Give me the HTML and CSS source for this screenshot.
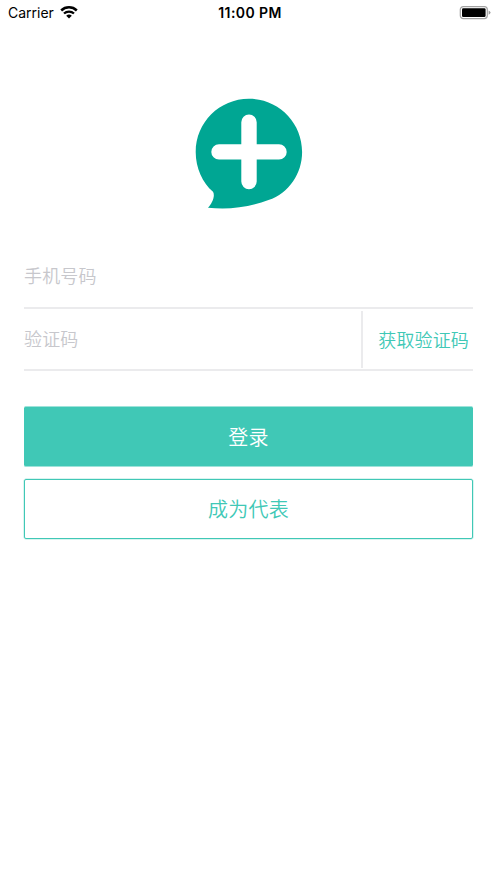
FILE: index.html
```html
<!DOCTYPE html>
<html lang="zh-CN">
<head>
<meta charset="utf-8">
<title>登录</title>
<link rel="stylesheet" href="styles.css">
</head>
<body>
<header class="status">
  <div class="carrier"><span>Carrier</span>
    <svg class="wifi" width="18" height="13" viewBox="0 0 18 13" fill="none" stroke="#000">
      <path d="M1.2 4.500C5.600.3 12.400.3 16.800 4.500" stroke-width="2.500"/>
      <path d="M4 7.500C6.800 4.900 11.200 4.900 14 7.500" stroke-width="2.300"/>
      <path d="M6.200 9.700Q9 7.500 11.800 9.700L9 12.500Z" fill="#000" stroke="none"/>
    </svg>
  </div>
  <div class="time">11:00 PM</div>
  <svg class="battery" width="32" height="14" viewBox="0 0 32 14">
    <rect x="1.300" y=".6" width="27" height="12" rx="3" fill="#fff" stroke="#a2a2a2" stroke-width="1.200"/>
    <rect x="3" y="2.200" width="23.600" height="8.800" rx="1.300"/>
    <path d="M29.600 4.400Q31.500 5.200 31.500 6.600T29.600 8.800Z" fill="#999"/>
  </svg>
</header>
<main class="login">
  <svg class="logo" width="130" height="130" viewBox="0 0 130 130">
    <path fill="#00a693" d="M63.900 8.800C93.300 8.800 117.100 32.500 117.100 61.900C117.100 83.500 104 103 83.500 110C64 117.500 43 120 23 117.700C27 113.500 30.500 106 28 101.800C17.500 92.500 10.700 78 10.700 61.900C10.700 32.500 34.500 8.800 63.900 8.800Z"/>
    <path d="M34 61.900H94M64 32.200V91.600" stroke="#fff" stroke-width="15.400" stroke-linecap="round"/>
  </svg>
  <div class="field"><span class="hint">手机号码</span></div>
  <div class="field code"><span class="hint">验证码</span><span class="get">获取验证码</span></div>
  <div class="button primary">登录</div>
  <div class="button outline">成为代表</div>
</main>
</body>
</html>
```
FILE: styles.css
```css
* { box-sizing: border-box; }
body {
  margin: 0;
  min-height: 883px;
  background: #fff;
  font-family: "Noto Sans CJK SC", sans-serif;
  font-weight: 350;
}
.status {
  display: grid;
  grid-template-columns: 1fr auto 1fr;
  align-items: center;
  height: 26px;
  padding: 0 6px 0 8px;
  font: 400 14px/26px Inter, sans-serif;
  color: #000;
}
.carrier { display: flex; align-items: center; gap: 6px; }
.wifi { margin-top: -2px; }
.time { padding-left: 1px; font-weight: 600; letter-spacing: .4px; }
.battery { justify-self: end; margin-top: -1px; }
.login { display: flex; flex-direction: column; padding: 64px 24px 0; }
.logo { margin-left: 161px; }
.field {
  display: flex;
  align-items: center;
  height: 63px;
  border-bottom: 2px solid #ebebed;
  color: #c7c7cc;
  font-size: 18px;
  letter-spacing: .15px;
}
.hint { padding-bottom: 3px; }
.logo + .field { margin-top: 26px; }
.code { height: 62px; justify-content: space-between; }
.get {
  display: flex;
  align-items: center;
  height: 57px;
  padding: 0 4px 1px 15px;
  border-left: 2px solid #ebebed;
  color: #40c8b6;
}
.button {
  display: flex;
  align-items: center;
  justify-content: center;
  height: 60px;
  padding-bottom: 1px;
  border-radius: 2px;
  font-size: 20px;
  letter-spacing: .3px;
}
.primary {
  height: 61px;
  margin-top: 35px;
  border: solid #9ee3da;
  border-width: 1px 0;
  background: #40c8b6;
  color: #fff;
}
.outline {
  margin-top: 12px;
  border: 1px solid #40c8b6;
  box-shadow: 0 0 0 .5px #b3e9e2;
  color: #40c8b6;
}
```
